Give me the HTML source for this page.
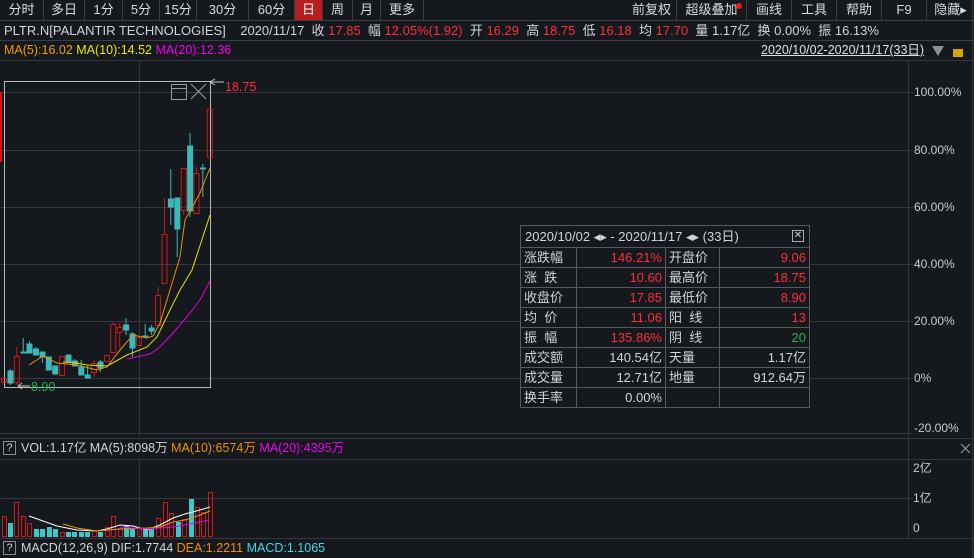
<!DOCTYPE html>
<html><head><meta charset="utf-8"><style>
*{margin:0;padding:0;box-sizing:border-box}
body{width:974px;height:558px;background:#15181d;overflow:hidden;position:relative;font-family:"Liberation Sans","Noto Sans CJK SC",sans-serif;font-size:13px;color:#d0d4da}
.a{position:absolute;white-space:nowrap}
.tb{position:absolute;top:0;height:20px;line-height:20px;text-align:center;border-right:1px solid #3a3d42;color:#d8dbe0;font-size:13px}
.r{color:#ff2e3a}.g{color:#22b24c}
.info{top:22px;font-size:13px;line-height:18px}
table{border-collapse:collapse;font-size:13px}
td{border:1px solid #56595e;height:20px;padding:0 3px;line-height:18px}
</style></head><body>
<div class="tb" style="left:0;width:44px">分时</div>
<div class="tb" style="left:44px;width:41px">多日</div>
<div class="tb" style="left:85px;width:38px">1分</div>
<div class="tb" style="left:123px;width:37px">5分</div>
<div class="tb" style="left:160px;width:37px">15分</div>
<div class="tb" style="left:197px;width:52px">30分</div>
<div class="tb" style="left:249px;width:46px">60分</div>
<div class="tb" style="left:295px;width:28px;background:#b81c1c;color:#fff">日</div>
<div class="tb" style="left:323px;width:30px">周</div>
<div class="tb" style="left:353px;width:28px">月</div>
<div class="tb" style="left:381px;width:43px">更多</div>
<div class="tb" style="left:627px;width:50px">前复权</div>
<div class="tb" style="left:677px;width:70px">超级叠加</div>
<div class="a" style="left:736px;top:3px;width:6px;height:6px;border-radius:3px;background:#f01818"></div>
<div class="tb" style="left:747px;width:45px">画线</div>
<div class="tb" style="left:792px;width:45px">工具</div>
<div class="tb" style="left:837px;width:45px">帮助</div>
<div class="tb" style="left:882px;width:45px">F9</div>
<div class="tb" style="left:927px;width:47px;border:none">隐藏▸</div>
<div class="a" style="left:0;top:20px;width:974px;height:1px;background:#3a3d42"></div>
<div class="a info" style="left:4px">PLTR.N[PALANTIR TECHNOLOGIES]&nbsp;&nbsp;&nbsp; 2020/11/17&nbsp; 收 <span class="r">17.85</span>&nbsp; 幅 <span class="r">12.05%(1.92)</span>&nbsp; 开 <span class="r">16.29</span>&nbsp; 高 <span class="r">18.75</span>&nbsp; 低 <span class="r">16.18</span>&nbsp; 均 <span class="r">17.70</span>&nbsp; 量 1.17亿&nbsp; 换 0.00%&nbsp; 振 16.13%</div>
<div class="a" style="left:0;top:40px;width:974px;height:1px;background:#3a3d42"></div>
<div class="a" style="left:4px;top:41px;line-height:18px;font-size:12.5px"><span style="color:#f0a000">MA(5):16.02</span> <span style="color:#e8e800">MA(10):14.52</span> <span style="color:#f000f0">MA(20):12.36</span></div>
<div class="a" style="left:761px;top:42px;font-size:12.5px;line-height:16px;text-decoration:underline;color:#e0e0e0">2020/10/02-2020/11/17(33日)</div>
<div class="a" style="left:932px;top:46px;width:0;height:0;border-left:6px solid transparent;border-right:6px solid transparent;border-top:10px solid #8a8d92"></div>
<div class="a" style="left:953px;top:49px;width:10px;height:8px;background:#d9a400"></div>

<svg class="a" style="left:0;top:0" width="974" height="558" xmlns="http://www.w3.org/2000/svg">
<g stroke="#34373c" stroke-width="1">
<line x1="0" y1="60.5" x2="974" y2="60.5"/>
<line x1="0" y1="92.5" x2="913" y2="92.5"/><line x1="0" y1="150.5" x2="913" y2="150.5"/>
<line x1="0" y1="207.5" x2="913" y2="207.5"/><line x1="0" y1="264.5" x2="913" y2="264.5"/>
<line x1="0" y1="321.5" x2="913" y2="321.5"/><line x1="0" y1="378.5" x2="913" y2="378.5"/>
<line x1="0" y1="433.5" x2="913" y2="433.5"/>
<line x1="139.5" y1="60" x2="139.5" y2="437"/><line x1="139.5" y1="459" x2="139.5" y2="538"/>
<line x1="908.5" y1="60" x2="908.5" y2="538"/>
<line x1="0" y1="438.5" x2="974" y2="438.5"/><line x1="0" y1="459.5" x2="974" y2="459.5"/>
<line x1="0" y1="498.5" x2="913" y2="498.5"/>
<line x1="0" y1="538.5" x2="974" y2="538.5"/>
<line x1="972.5" y1="0" x2="972.5" y2="558"/>
</g>
<rect x="0" y="92" width="2" height="70" fill="#d01818"/>
<rect x="4.5" y="81.5" width="206" height="306" fill="none" stroke="#b8babd"/>
<rect x="171.5" y="84.5" width="15" height="15" fill="none" stroke="#9a9ca0"/>
<line x1="172" y1="88.5" x2="186" y2="88.5" stroke="#9a9ca0"/>
<path d="M191 84L206 99M206 84L191 99" stroke="#9a9ca0"/>
<path d="M210 82l5 -3M210 82l5 3M210 82h14" stroke="#c8c8c8" fill="none"/>
<text x="225" y="91" fill="#ff2e3a" font-size="12.5" font-family="Liberation Sans">18.75</text>
<path d="M18 386l4 -3M18 386l4 3M18 386h12" stroke="#c8c8c8" fill="none"/>
<text x="31" y="391" fill="#22b24c" font-size="12.5" font-family="Liberation Sans">8.90</text>
<g stroke="#d01818" fill="none">
<rect x="1.5" y="378.5" width="5" height="4"/>
<line x1="16.8" y1="347" x2="16.8" y2="356"/><line x1="16.8" y1="383" x2="16.8" y2="385"/><rect x="14.3" y="356.5" width="5" height="26"/>
<rect x="59.6" y="356.5" width="5" height="19"/>
<rect x="91.6" y="363.5" width="5" height="9"/><line x1="94.1" y1="360" x2="94.1" y2="363"/><line x1="94.1" y1="372" x2="94.1" y2="377"/>
<rect x="104.4" y="355.5" width="5" height="6"/>
<rect x="110.8" y="324.5" width="5" height="28"/><line x1="113.3" y1="322" x2="113.3" y2="324"/>
<rect x="117.2" y="327.5" width="5" height="5"/><line x1="119.7" y1="323" x2="119.7" y2="327"/><line x1="119.7" y1="332" x2="119.7" y2="348"/>
<rect x="136.4" y="337.5" width="5" height="8"/>
<rect x="155.6" y="295.5" width="5" height="30"/><line x1="158.1" y1="287" x2="158.1" y2="295"/>
<rect x="162" y="234.5" width="5" height="49"/><line x1="164.5" y1="198" x2="164.5" y2="234"/>
<rect x="181.2" y="168.5" width="5" height="42"/><line x1="183.7" y1="210" x2="183.7" y2="215"/>
<rect x="194" y="173.5" width="5" height="40"/><line x1="196.5" y1="167" x2="196.5" y2="173"/>
<rect x="207.3" y="109.5" width="5" height="48"/>
</g>
<g fill="#3bb8b8" stroke="#3bb8b8">
<rect x="8" y="371" width="5" height="12"/><line x1="10.4" y1="369" x2="10.4" y2="385"/>
<rect x="21" y="352" width="5" height="1"/><line x1="23.2" y1="338" x2="23.2" y2="353"/>
<rect x="27" y="344" width="5" height="9"/><line x1="29.6" y1="341" x2="29.6" y2="353"/>
<rect x="33.5" y="349" width="5" height="6"/><line x1="36" y1="347" x2="36" y2="355"/>
<rect x="40" y="352" width="5" height="5"/><line x1="42.4" y1="352" x2="42.4" y2="363"/>
<rect x="46.3" y="357" width="5" height="13"/>
<rect x="52.7" y="366" width="5" height="8"/>
<rect x="66" y="355" width="5" height="7"/>
<rect x="72.4" y="361" width="5" height="5"/><line x1="74.8" y1="359" x2="74.8" y2="366"/>
<rect x="78.8" y="367" width="5" height="8"/><line x1="81.2" y1="360" x2="81.2" y2="375"/>
<rect x="85.2" y="375" width="5" height="3"/><line x1="87.6" y1="366" x2="87.6" y2="378"/>
<rect x="98" y="362" width="5" height="6"/><line x1="100.4" y1="360" x2="100.4" y2="372"/>
<rect x="123.6" y="325" width="5" height="5"/><line x1="126" y1="318" x2="126" y2="335"/>
<rect x="130" y="334" width="5" height="14"/><line x1="132.4" y1="332" x2="132.4" y2="357"/>
<rect x="142.8" y="336" width="5" height="1"/><line x1="145.2" y1="324" x2="145.2" y2="338"/>
<rect x="149.2" y="328" width="5" height="3"/><line x1="151.6" y1="325" x2="151.6" y2="335"/>
<rect x="168.4" y="199" width="5" height="8"/><line x1="170.8" y1="169" x2="170.8" y2="225"/>
<rect x="174.8" y="198" width="5" height="31"/><line x1="177.2" y1="227" x2="177.2" y2="257"/>
<rect x="187.6" y="146" width="5" height="65"/><line x1="190" y1="133" x2="190" y2="217"/>
<rect x="200.4" y="168" width="5" height="1"/><line x1="202.8" y1="164" x2="202.8" y2="197"/>
</g>
<polyline fill="none" stroke="#f09000" points="29,365 43,356 57,363 77,365 97,370 107,367 120,350 133,335 147,338 153,336 160,323 173,280 180,257 185,220 200,193 210,168"/>
<polyline fill="none" stroke="#e8e000" points="63,362 77,363 87,365 107,366 127,355 147,347 157,337 170,310 180,290 192,270 210,215"/>
<polyline fill="none" stroke="#e000e0" points="127,359 150,354 160,347 173,333 190,313 200,300 210,281"/>
<g fill="#d01818" stroke="none"></g>
<g stroke="#d01818" fill="none">
<rect x="2.5" y="516.5" width="4" height="20"/><rect x="14.5" y="502.5" width="4" height="34"/><rect x="21.5" y="516.5" width="4" height="20"/><rect x="27.5" y="523.5" width="4" height="13"/>
<rect x="60.5" y="532.5" width="4" height="4"/><rect x="92.5" y="530.5" width="4" height="6"/><rect x="105.5" y="527.5" width="4" height="9"/><rect x="111.5" y="516.5" width="4" height="20"/><rect x="118.5" y="528.5" width="4" height="8"/>
<rect x="137.5" y="528.5" width="4" height="8"/><rect x="156.5" y="518.5" width="4" height="18"/><rect x="163.5" y="502.5" width="4" height="34"/><rect x="169.5" y="513.5" width="4" height="23"/><rect x="182.5" y="519.5" width="4" height="17"/><rect x="195.5" y="507.5" width="4" height="29"/><rect x="201.5" y="512.5" width="4" height="24"/><rect x="208.5" y="492.5" width="4" height="44"/>
</g>
<g fill="#3cc8c8">
<rect x="8" y="523" width="5" height="14"/><rect x="34" y="529" width="5" height="8"/><rect x="40" y="529" width="5" height="8"/><rect x="47" y="527" width="5" height="10"/><rect x="53" y="529" width="5" height="8"/><rect x="66" y="532" width="5" height="5"/><rect x="72" y="532" width="5" height="5"/><rect x="79" y="532" width="5" height="5"/><rect x="85" y="532" width="5" height="5"/><rect x="98" y="532" width="5" height="5"/><rect x="124" y="525" width="5" height="12"/><rect x="130" y="529" width="5" height="8"/><rect x="143" y="529" width="5" height="8"/><rect x="149" y="529" width="5" height="8"/><rect x="176" y="522" width="5" height="15"/><rect x="189" y="499" width="5" height="38"/>
</g>
<polyline fill="none" stroke="#ffffff" points="29,516 43,521 57,526 77,530 97,531 107,529 120,525 133,526 147,530 160,525 173,518 185,514 200,510 210,507"/>
<polyline fill="none" stroke="#f09000" points="63,524 77,528 97,531 120,529 147,528 160,527 173,522 185,520 200,515 210,511"/>
<polyline fill="none" stroke="#e000e0" points="120,527 147,529 160,528 173,527 190,524 210,520"/>
<path d="M961 444l9 9M970 444l-9 9" stroke="#9a9ca0"/>
</svg>

<div class="a" style="left:914px;top:84px;font-size:12px;color:#c8ccd2;line-height:16px">100.00%</div>
<div class="a" style="left:914px;top:142px;font-size:12px;color:#c8ccd2;line-height:16px">80.00%</div>
<div class="a" style="left:914px;top:199px;font-size:12px;color:#c8ccd2;line-height:16px">60.00%</div>
<div class="a" style="left:914px;top:256px;font-size:12px;color:#c8ccd2;line-height:16px">40.00%</div>
<div class="a" style="left:914px;top:313px;font-size:12px;color:#c8ccd2;line-height:16px">20.00%</div>
<div class="a" style="left:914px;top:370px;font-size:12px;color:#c8ccd2;line-height:16px">0%</div>
<div class="a" style="left:914px;top:420px;font-size:12px;color:#c8ccd2;line-height:16px">-20.00%</div>
<div class="a" style="left:913px;top:460px;font-size:12px;color:#c8ccd2;line-height:16px">2亿</div>
<div class="a" style="left:913px;top:490px;font-size:12px;color:#c8ccd2;line-height:16px">1亿</div>
<div class="a" style="left:913px;top:520px;font-size:12px;color:#c8ccd2;line-height:16px">0</div>

<div class="a" style="left:3px;top:441px;width:13px;height:14px;border:1px solid #8a8d92;font-size:11px;line-height:12px;text-align:center">?</div>
<div class="a" style="left:21px;top:440px;font-size:12.5px;line-height:17px">VOL:1.17亿 MA(5):8098万 <span style="color:#f09000">MA(10):6574万</span> <span style="color:#f000f0">MA(20):4395万</span></div>
<div class="a" style="left:3px;top:541px;width:13px;height:14px;border:1px solid #8a8d92;font-size:11px;line-height:12px;text-align:center">?</div>
<div class="a" style="left:21px;top:540px;font-size:12.5px;line-height:17px">MACD(12,26,9) DIF:1.7744 <span style="color:#f09000">DEA:1.2211</span> <span style="color:#40d8e8">MACD:1.1065</span></div>

<div class="a" style="left:520px;top:225px;width:290px;background:#15181d">
<div style="height:22px;border:1px solid #56595e;border-bottom:none;line-height:21px;padding-left:4px;position:relative">2020/10/02 ◂▸ - 2020/11/17 ◂▸ (33日)<span style="position:absolute;right:5px;top:4px;width:12px;height:12px;border:1px solid #aaa;font-size:10px;line-height:10px;text-align:center">✕</span></div>
<table style="width:290px">
<tr><td style="width:56px">涨跌幅</td><td class="r" style="text-align:right;width:89px">146.21%</td><td style="width:54px">开盘价</td><td class="r" style="text-align:right">9.06</td></tr>
<tr><td>涨&nbsp;&nbsp;跌</td><td class="r" style="text-align:right">10.60</td><td>最高价</td><td class="r" style="text-align:right">18.75</td></tr>
<tr><td>收盘价</td><td class="r" style="text-align:right">17.85</td><td>最低价</td><td class="r" style="text-align:right">8.90</td></tr>
<tr><td>均&nbsp;&nbsp;价</td><td class="r" style="text-align:right">11.06</td><td>阳&nbsp;&nbsp;线</td><td class="r" style="text-align:right">13</td></tr>
<tr><td>振&nbsp;&nbsp;幅</td><td class="r" style="text-align:right">135.86%</td><td>阴&nbsp;&nbsp;线</td><td class="g" style="text-align:right">20</td></tr>
<tr><td>成交额</td><td style="text-align:right">140.54亿</td><td>天量</td><td style="text-align:right">1.17亿</td></tr>
<tr><td>成交量</td><td style="text-align:right">12.71亿</td><td>地量</td><td style="text-align:right">912.64万</td></tr>
<tr><td>换手率</td><td style="text-align:right">0.00%</td><td></td><td></td></tr>
</table></div>
</body></html>
